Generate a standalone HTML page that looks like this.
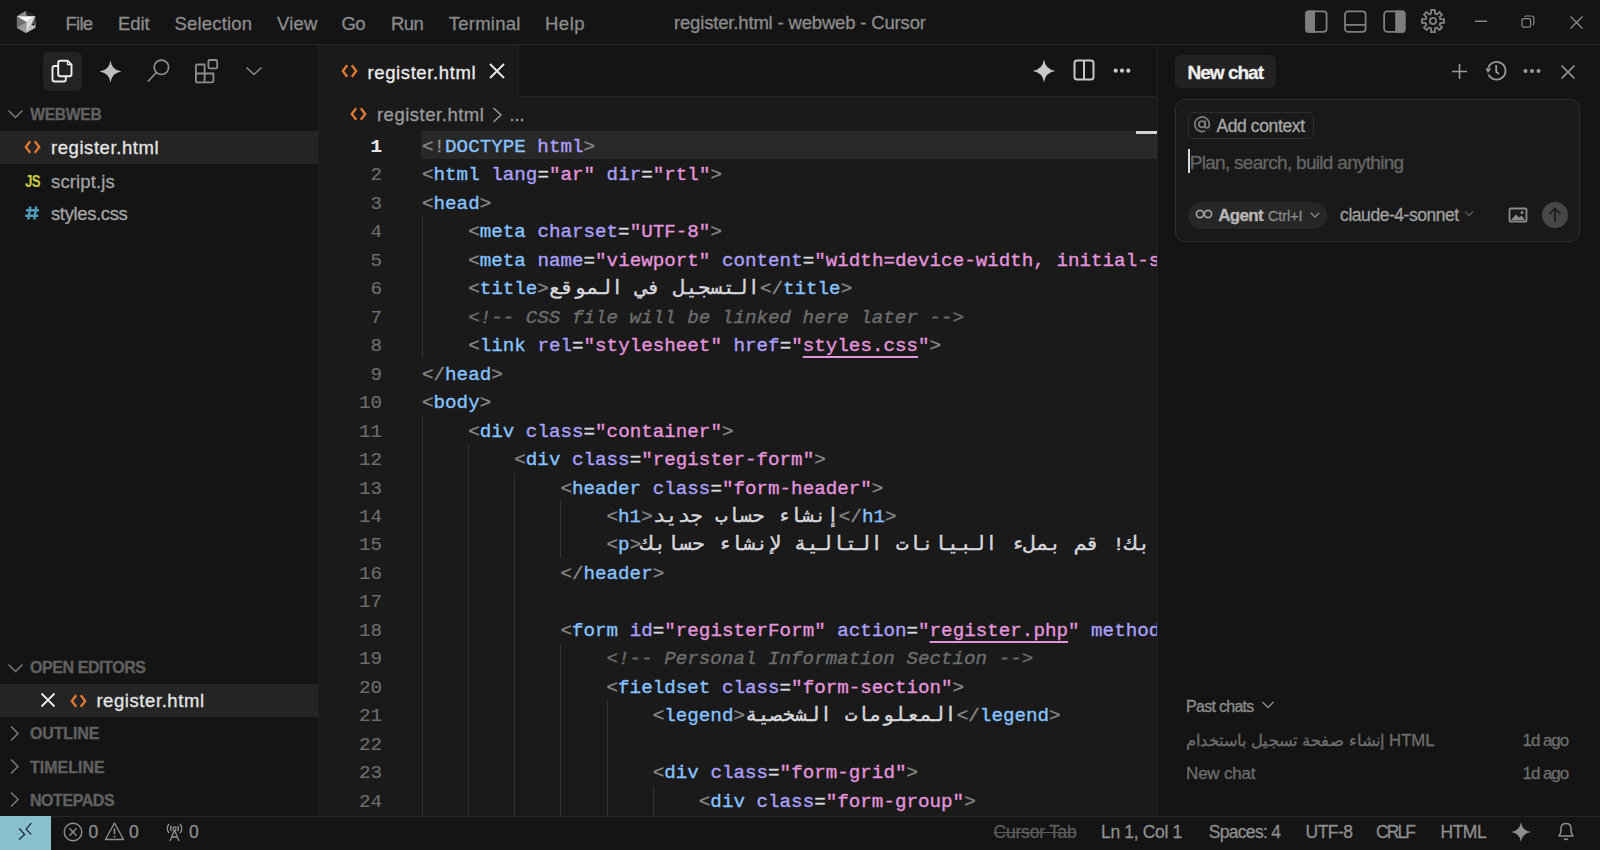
<!DOCTYPE html><html><head><meta charset="utf-8"><style>
html,body{margin:0;padding:0}
body{width:1600px;height:850px;overflow:hidden;position:relative;background:#141414;font-family:"Liberation Sans",sans-serif}
.t{position:absolute;white-space:pre;-webkit-text-stroke:0.3px currentColor}
.r{position:absolute}
.c{position:absolute;left:422px;width:735px;overflow:hidden;white-space:pre;font-family:"Liberation Mono",monospace;font-size:19.23px;line-height:28.49px;height:28.49px;color:#d6d6dd;-webkit-text-stroke:0.35px currentColor}
.ln{position:absolute;left:330px;width:52px;text-align:right;font-family:"Liberation Mono",monospace;font-size:19.23px;line-height:28.49px;-webkit-text-stroke:0.15px currentColor}
.p{color:#898989}.g{color:#87c3ff}.a{color:#aaa0fa}.s{color:#e394dc}.e{color:#d6d6dd}.x{color:#d6d6dd}.m{color:#6d6d6d;font-style:italic}
.ar{display:inline-block;vertical-align:baseline;white-space:pre}.ari{display:inline-block;transform-origin:0 0;white-space:pre}
.u{text-decoration:underline;text-underline-offset:5px;text-decoration-thickness:2px}
</style></head><body>
<div class="r" style="left:0px;top:0px;width:1600px;height:44px;background:#141414;"></div>
<div class="r" style="left:0px;top:44px;width:1600px;height:1px;background:#252525;"></div>
<div class="r" style="left:0px;top:45px;width:318px;height:771px;background:#141414;"></div>
<div class="r" style="left:318px;top:45px;width:1px;height:771px;background:#1f1f1f;"></div>
<div class="r" style="left:319px;top:45px;width:838px;height:771px;background:#1a1a1a;"></div>
<div class="r" style="left:319px;top:45px;width:838px;height:51px;background:#141414;"></div>
<div class="r" style="left:319px;top:96px;width:838px;height:1px;background:#252525;"></div>
<div class="r" style="left:319px;top:45px;width:199px;height:52px;background:#1a1a1a;"></div>
<div class="r" style="left:518px;top:45px;width:1px;height:51px;background:#252525;"></div>
<div class="r" style="left:1157px;top:45px;width:1px;height:771px;background:#222222;"></div>
<div class="r" style="left:1158px;top:45px;width:442px;height:771px;background:#141414;"></div>
<div class="r" style="left:0px;top:816px;width:1600px;height:1px;background:#252525;"></div>
<div class="r" style="left:0px;top:817px;width:1600px;height:33px;background:#141414;"></div>
<svg class="r" style="left:12px;top:8px;" width="28" height="28" viewBox="0 0 28 28"><path d="M4.9 8.2 L13.5 3 L23.4 8.2 L23.4 19.8 L14 25 L4.9 19.8Z" fill="#555"/><path d="M4.9 8.2 L13.5 3 L15 8.2Z" fill="#8c8c8c"/><path d="M13.5 3 L23.4 8.2 L15 8.2Z" fill="#2c2c2c"/><path d="M4.9 8.2 L14.5 14 L14 25 L4.9 19.8Z" fill="#707070"/><path d="M4.9 19.8 L14 14.5 L14 25Z" fill="#9a9a9a"/><path d="M4.9 8.2 L23.4 8.2 L14.5 14Z" fill="#f6f6f6"/><path d="M14.5 14 L23.4 8.2 L19 17 L14 25Z" fill="#dcdcdc"/><path d="M19 17 L23.4 14 L23.4 19.8 L14 25Z" fill="#bdbdbd"/><path d="M19.5 16.5 L23.4 14.5 L22 18Z" fill="#1e1e1e"/></svg>
<div class="t" style="left:65.50px;top:14.84px;font-size:18.5px;line-height:18.5px;color:#8c8c8c;font-weight:400;font-family:'Liberation Sans';letter-spacing:-0.762px;">File</div>
<div class="t" style="left:118.00px;top:14.84px;font-size:18.5px;line-height:18.5px;color:#8c8c8c;font-weight:400;font-family:'Liberation Sans';letter-spacing:-0.071px;">Edit</div>
<div class="t" style="left:174.40px;top:14.84px;font-size:18.5px;line-height:18.5px;color:#8c8c8c;font-weight:400;font-family:'Liberation Sans';letter-spacing:0.197px;">Selection</div>
<div class="t" style="left:276.90px;top:14.84px;font-size:18.5px;line-height:18.5px;color:#8c8c8c;font-weight:400;font-family:'Liberation Sans';letter-spacing:0.242px;">View</div>
<div class="t" style="left:341.50px;top:14.84px;font-size:18.5px;line-height:18.5px;color:#8c8c8c;font-weight:400;font-family:'Liberation Sans';letter-spacing:-0.598px;">Go</div>
<div class="t" style="left:391.00px;top:14.84px;font-size:18.5px;line-height:18.5px;color:#8c8c8c;font-weight:400;font-family:'Liberation Sans';letter-spacing:-0.624px;">Run</div>
<div class="t" style="left:448.80px;top:14.84px;font-size:18.5px;line-height:18.5px;color:#8c8c8c;font-weight:400;font-family:'Liberation Sans';letter-spacing:0.224px;">Terminal</div>
<div class="t" style="left:545.00px;top:14.84px;font-size:18.5px;line-height:18.5px;color:#8c8c8c;font-weight:400;font-family:'Liberation Sans';letter-spacing:0.494px;">Help</div>
<div class="t" style="left:674.00px;top:13.84px;font-size:18.5px;line-height:18.5px;color:#8c8c8c;font-weight:400;font-family:'Liberation Sans';letter-spacing:-0.169px;">register.html - webweb - Cursor</div>
<svg class="r" style="left:1304px;top:10px;" width="24" height="23" viewBox="0 0 24 23"><rect x="2.1" y="1.4" width="20.5" height="20.4" rx="3" fill="none" stroke="#7e7e7e" stroke-width="1.8"/><path d="M4.1 0.5 L11 0.5 L11 22.7 L4.1 22.7 Q1.2 22.7 1.2 19.8 L1.2 3.4 Q1.2 0.5 4.1 0.5Z" fill="#7e7e7e"/></svg>
<svg class="r" style="left:1343px;top:10px;" width="24" height="23" viewBox="0 0 24 23"><rect x="2" y="1.4" width="20.6" height="20.4" rx="3" fill="none" stroke="#7e7e7e" stroke-width="1.8"/><rect x="2" y="14.0" width="20.6" height="1.8" fill="#7e7e7e"/></svg>
<svg class="r" style="left:1382px;top:10px;" width="24" height="23" viewBox="0 0 24 23"><rect x="2.1" y="1.4" width="20.5" height="20.4" rx="3" fill="none" stroke="#7e7e7e" stroke-width="1.8"/><path d="M13.2 0.5 L20.6 0.5 Q23.5 0.5 23.5 3.4 L23.5 19.8 Q23.5 22.7 20.6 22.7 L13.2 22.7Z" fill="#7e7e7e"/></svg>
<svg class="r" style="left:1420px;top:8px;" width="26" height="26" viewBox="0 0 26 26"><path d="M10.97 5.68 L11.23 2.04 L14.77 2.04 L15.03 5.68 L16.75 6.39 L19.50 4.00 L22.00 6.50 L19.61 9.25 L20.32 10.97 L23.96 11.23 L23.96 14.77 L20.32 15.03 L19.61 16.75 L22.00 19.50 L19.50 22.00 L16.75 19.61 L15.03 20.32 L14.77 23.96 L11.23 23.96 L10.97 20.32 L9.25 19.61 L6.50 22.00 L4.00 19.50 L6.39 16.75 L5.68 15.03 L2.04 14.77 L2.04 11.23 L5.68 10.97 L6.39 9.25 L4.00 6.50 L6.50 4.00 L9.25 6.39Z" fill="none" stroke="#7e7e7e" stroke-width="1.9" stroke-linejoin="miter"/><circle cx="13" cy="13" r="3.1" fill="none" stroke="#7e7e7e" stroke-width="1.9"/></svg>
<svg class="r" style="left:1474px;top:20px;" width="14" height="3" viewBox="0 0 14 3"><rect x="1" y="0.5" width="12" height="1.5" fill="#8a8a8a"/></svg>
<svg class="r" style="left:1521px;top:15px;" width="14" height="14" viewBox="0 0 14 14"><rect x="1" y="3.6" width="8.6" height="8.6" rx="1.6" fill="none" stroke="#8a8a8a" stroke-width="1.2"/><path d="M3.6 1.8 Q4 1 5 1 L10.8 1 Q12.8 1 12.8 3 L12.8 8.6 Q12.8 9.6 11.8 9.8" fill="none" stroke="#8a8a8a" stroke-width="1.2"/></svg>
<svg class="r" style="left:1569px;top:15px;" width="15" height="15" viewBox="0 0 15 15"><path d="M1.5 1.5 L13.5 13.5 M13.5 1.5 L1.5 13.5" stroke="#8a8a8a" stroke-width="1.4"/></svg>
<div class="r" style="left:43px;top:52px;width:39px;height:39px;background:#232323;border-radius:6px;"></div>
<svg class="r" style="left:50px;top:59px;" width="24" height="26" viewBox="0 0 24 26"><path d="M8.2 7 L4.5 7 Q2.5 7 2.5 9 L2.5 20.5 Q2.5 22.5 4.5 22.5 L13.8 22.5 Q15.8 22.5 15.8 20.5 L15.8 17.3" fill="none" stroke="#ededed" stroke-width="1.9"/><path d="M8.2 3.7 Q8.2 1.7 10.2 1.7 L17.5 1.7 L21.5 5.7 L21.5 15.3 Q21.5 17.3 19.5 17.3 L10.2 17.3 Q8.2 17.3 8.2 15.3 Z" fill="none" stroke="#ededed" stroke-width="1.9" stroke-linejoin="round"/><path d="M17.5 1.7 L17.5 5.7 L21.5 5.7" fill="none" stroke="#ededed" stroke-width="1.3"/></svg>
<svg class="r" style="left:98px;top:59px;" width="25" height="25" viewBox="0 0 25 25"><path d="M12.5 1.5 Q13.82 11.18 23.5 12.5 Q13.82 13.82 12.5 23.5 Q11.18 13.82 1.5 12.5 Q11.18 11.18 12.5 1.5Z" fill="#bdbdbd"/></svg>
<svg class="r" style="left:146px;top:59px;" width="25" height="25" viewBox="0 0 25 25"><circle cx="15.4" cy="8.3" r="7.2" fill="none" stroke="#8e8e8e" stroke-width="1.7"/><path d="M10.2 13.5 L2.5 22" stroke="#8e8e8e" stroke-width="1.7" stroke-linecap="round"/></svg>
<svg class="r" style="left:193px;top:58px;" width="27" height="27" viewBox="0 0 27 27"><path d="M2.9 8 Q2.9 6.5 4.4 6.5 L11.6 6.5 L11.6 15.5 L20.4 15.5 L20.4 22.9 Q20.4 24.4 18.9 24.4 L4.4 24.4 Q2.9 24.4 2.9 22.9 Z M2.9 15.5 L11.6 15.5 M11.6 15.5 L11.6 24.4" fill="none" stroke="#8e8e8e" stroke-width="1.8"/><rect x="15.4" y="2" width="8.8" height="8.4" rx="1.5" fill="none" stroke="#8e8e8e" stroke-width="1.8"/></svg>
<svg class="r" style="left:244px;top:64px;" width="20" height="14" viewBox="0 0 20 14"><path d="M2.5 3.5 L10 10.5 L17.5 3.5" fill="none" stroke="#8a8a8a" stroke-width="1.6"/></svg>
<svg class="r" style="left:7px;top:108.5px;" width="17" height="11" viewBox="0 0 17 11"><path d="M1.5 1.5 L8.5 8.5 L15.5 1.5" fill="none" stroke="#7a7a7a" stroke-width="1.5"/></svg>
<div class="t" style="left:30.20px;top:106.79px;font-size:15.6px;line-height:15.6px;color:#616161;font-weight:700;font-family:'Liberation Sans';letter-spacing:-0.235px;">WEBWEB</div>
<div class="r" style="left:0px;top:131px;width:318px;height:33px;background:#242424;"></div>
<svg class="r" style="left:24px;top:140.0px;" width="17" height="14" viewBox="0 0 17 14"><path d="M6.2 1.2 L1.8 7 L6.2 12.8 M10.8 1.2 L15.2 7 L10.8 12.8" fill="none" stroke="#e37933" stroke-width="2.3" stroke-linejoin="miter"/></svg>
<div class="t" style="left:51.00px;top:139.34px;font-size:18.5px;line-height:18.5px;color:#e4e4e4;font-weight:400;font-family:'Liberation Sans';letter-spacing:0.564px;">register.html</div>
<div class="t" style="left:25.00px;top:172.79px;font-size:16.2px;line-height:16.2px;color:#cbcb41;font-weight:700;font-family:'Liberation Sans';letter-spacing:-0.8px;transform:scaleX(0.82);transform-origin:0 0;-webkit-text-stroke:0.1px currentColor;">JS</div>
<div class="t" style="left:51.00px;top:172.84px;font-size:18.5px;line-height:18.5px;color:#a3a3a3;font-weight:400;font-family:'Liberation Sans';letter-spacing:0.136px;">script.js</div>
<svg class="r" style="left:24px;top:205px;" width="17" height="16" viewBox="0 0 17 16"><path d="M6.3 1.5 L4.3 14.5 M12.3 1.5 L10.3 14.5 M2 5.3 L15 5.3 M1.2 10.7 L14.2 10.7" stroke="#519aba" stroke-width="2.4"/></svg>
<div class="t" style="left:51.00px;top:205.24px;font-size:18.5px;line-height:18.5px;color:#a3a3a3;font-weight:400;font-family:'Liberation Sans';letter-spacing:-0.378px;">styles.css</div>
<svg class="r" style="left:7px;top:663px;" width="17" height="11" viewBox="0 0 17 11"><path d="M1.5 1.5 L8.5 8.5 L15.5 1.5" fill="none" stroke="#7a7a7a" stroke-width="1.5"/></svg>
<div class="t" style="left:30.00px;top:660.06px;font-size:16px;line-height:16px;color:#616161;font-weight:700;font-family:'Liberation Sans';letter-spacing:-0.422px;">OPEN EDITORS</div>
<div class="r" style="left:0px;top:684px;width:318px;height:33px;background:#242424;"></div>
<svg class="r" style="left:40px;top:692px;" width="16" height="16" viewBox="0 0 16 16"><path d="M1.5 1.5 L14.5 14.5 M14.5 1.5 L1.5 14.5" stroke="#e8e8e8" stroke-width="1.8"/></svg>
<svg class="r" style="left:69.5px;top:693.5px;" width="17" height="14" viewBox="0 0 17 14"><path d="M6.2 1.2 L1.8 7 L6.2 12.8 M10.8 1.2 L15.2 7 L10.8 12.8" fill="none" stroke="#e37933" stroke-width="2.3" stroke-linejoin="miter"/></svg>
<div class="t" style="left:96.40px;top:692.34px;font-size:18.5px;line-height:18.5px;color:#e4e4e4;font-weight:400;font-family:'Liberation Sans';letter-spacing:0.572px;">register.html</div>
<svg class="r" style="left:9.3px;top:724.7px;" width="11" height="17" viewBox="0 0 11 17"><path d="M2 1.5 L9 8.5 L2 15.5" fill="none" stroke="#7a7a7a" stroke-width="1.5"/></svg>
<div class="t" style="left:30.00px;top:726.26px;font-size:16px;line-height:16px;color:#616161;font-weight:700;font-family:'Liberation Sans';letter-spacing:-0.140px;">OUTLINE</div>
<svg class="r" style="left:9.3px;top:758.1px;" width="11" height="17" viewBox="0 0 11 17"><path d="M2 1.5 L9 8.5 L2 15.5" fill="none" stroke="#7a7a7a" stroke-width="1.5"/></svg>
<div class="t" style="left:30.00px;top:759.66px;font-size:16px;line-height:16px;color:#616161;font-weight:700;font-family:'Liberation Sans';letter-spacing:-0.006px;">TIMELINE</div>
<svg class="r" style="left:9.3px;top:791.3000000000001px;" width="11" height="17" viewBox="0 0 11 17"><path d="M2 1.5 L9 8.5 L2 15.5" fill="none" stroke="#7a7a7a" stroke-width="1.5"/></svg>
<div class="t" style="left:30.00px;top:792.86px;font-size:16px;line-height:16px;color:#616161;font-weight:700;font-family:'Liberation Sans';letter-spacing:-0.440px;">NOTEPADS</div>
<svg class="r" style="left:340.5px;top:64.0px;" width="17" height="14" viewBox="0 0 17 14"><path d="M6.2 1.2 L1.8 7 L6.2 12.8 M10.8 1.2 L15.2 7 L10.8 12.8" fill="none" stroke="#e37933" stroke-width="2.3" stroke-linejoin="miter"/></svg>
<div class="t" style="left:367.50px;top:63.64px;font-size:18.5px;line-height:18.5px;color:#ececec;font-weight:400;font-family:'Liberation Sans';letter-spacing:0.606px;">register.html</div>
<svg class="r" style="left:488px;top:62px;" width="18" height="18" viewBox="0 0 18 18"><path d="M2 2 L16 16 M16 2 L2 16" stroke="#e8e8e8" stroke-width="1.9"/></svg>
<svg class="r" style="left:1031px;top:58px;" width="26" height="26" viewBox="0 0 26 26"><path d="M13 1.5999999999999996 Q14.368 11.632 24.4 13 Q14.368 14.368 13 24.4 Q11.632 14.368 1.5999999999999996 13 Q11.632 11.632 13 1.5999999999999996Z" fill="#c8c8c8"/></svg>
<svg class="r" style="left:1072px;top:58px;" width="24" height="24" viewBox="0 0 24 24"><rect x="2.5" y="2.5" width="19" height="19" rx="2.5" fill="none" stroke="#c8c8c8" stroke-width="2"/><path d="M12 2.5 L12 21.5" stroke="#c8c8c8" stroke-width="2"/></svg>
<svg class="r" style="left:1112px;top:67px;" width="20" height="8" viewBox="0 0 20 8"><circle cx="3.7" cy="3.7" r="2.1" fill="#c8c8c8"/><circle cx="10" cy="3.7" r="2.1" fill="#c8c8c8"/><circle cx="16.3" cy="3.7" r="2.1" fill="#c8c8c8"/></svg>
<svg class="r" style="left:350px;top:107.0px;" width="17" height="14" viewBox="0 0 17 14"><path d="M6.2 1.2 L1.8 7 L6.2 12.8 M10.8 1.2 L15.2 7 L10.8 12.8" fill="none" stroke="#e37933" stroke-width="2.3" stroke-linejoin="miter"/></svg>
<div class="t" style="left:376.90px;top:105.74px;font-size:18.5px;line-height:18.5px;color:#9a9a9a;font-weight:400;font-family:'Liberation Sans';letter-spacing:0.522px;">register.html</div>
<svg class="r" style="left:491px;top:106px;" width="13" height="18" viewBox="0 0 13 18"><path d="M2.5 2 L10 9 L2.5 16" fill="none" stroke="#9a9a9a" stroke-width="1.5"/></svg>
<div class="t" style="left:509.50px;top:106.16px;font-size:18px;line-height:18px;color:#9a9a9a;font-weight:400;font-family:'Liberation Sans';">...</div>
<div class="r" style="left:421px;top:131px;width:736px;height:28px;background:#282828;"></div>
<div class="r" style="left:1136px;top:130.5px;width:21px;height:3.5px;background:#d4d4d4;"></div>
<div class="r" style="left:422px;top:216px;width:1px;height:142px;background:#333333;"></div>
<div class="r" style="left:422px;top:416px;width:1px;height:400px;background:#333333;"></div>
<div class="r" style="left:468px;top:444px;width:1px;height:372px;background:#333333;"></div>
<div class="r" style="left:514px;top:473px;width:1px;height:343px;background:#333333;"></div>
<div class="r" style="left:560px;top:501px;width:1px;height:57px;background:#333333;"></div>
<div class="r" style="left:560px;top:644px;width:1px;height:172px;background:#333333;"></div>
<div class="r" style="left:607px;top:701px;width:1px;height:115px;background:#333333;"></div>
<div class="r" style="left:653px;top:786px;width:1px;height:30px;background:#333333;"></div>
<div class="ln" style="top:132.63px;color:#e8e8e8;font-weight:700">1</div>
<div class="c" style="top:132.63px"><span class="p">&lt;!</span><span class="g">DOCTYPE</span> <span class="a">html</span><span class="p">&gt;</span></div>
<div class="ln" style="top:161.12px;color:#6e6e6e;font-weight:400">2</div>
<div class="c" style="top:161.12px"><span class="p">&lt;</span><span class="g">html</span> <span class="a">lang</span><span class="e">=</span><span class="s">&quot;ar&quot;</span> <span class="a">dir</span><span class="e">=</span><span class="s">&quot;rtl&quot;</span><span class="p">&gt;</span></div>
<div class="ln" style="top:189.61px;color:#6e6e6e;font-weight:400">3</div>
<div class="c" style="top:189.61px"><span class="p">&lt;</span><span class="g">head</span><span class="p">&gt;</span></div>
<div class="ln" style="top:218.10px;color:#6e6e6e;font-weight:400">4</div>
<div class="c" style="top:218.10px">    <span class="p">&lt;</span><span class="g">meta</span> <span class="a">charset</span><span class="e">=</span><span class="s">&quot;UTF-8&quot;</span><span class="p">&gt;</span></div>
<div class="ln" style="top:246.59px;color:#6e6e6e;font-weight:400">5</div>
<div class="c" style="top:246.59px">    <span class="p">&lt;</span><span class="g">meta</span> <span class="a">name</span><span class="e">=</span><span class="s">&quot;viewport&quot;</span> <span class="a">content</span><span class="e">=</span><span class="s">&quot;width=device-width, initial-scale=1.0&quot;</span><span class="p">&gt;</span></div>
<div class="ln" style="top:275.08px;color:#6e6e6e;font-weight:400">6</div>
<div class="c" style="top:275.08px">    <span class="p">&lt;</span><span class="g">title</span><span class="p">&gt;</span><span class="x ar" style="width:211.00px"><span class="ari" style="transform:scaleX(1.0711)">التسجيل في الموقع</span></span><span class="p">&lt;/</span><span class="g">title</span><span class="p">&gt;</span></div>
<div class="ln" style="top:303.57px;color:#6e6e6e;font-weight:400">7</div>
<div class="c" style="top:303.57px">    <span class="m">&lt;!-- CSS file will be linked here later --&gt;</span></div>
<div class="ln" style="top:332.06px;color:#6e6e6e;font-weight:400">8</div>
<div class="c" style="top:332.06px">    <span class="p">&lt;</span><span class="g">link</span> <span class="a">rel</span><span class="e">=</span><span class="s">&quot;stylesheet&quot;</span> <span class="a">href</span><span class="e">=</span><span class="s">"</span><span class="s u">styles.css</span><span class="s">"</span><span class="p">&gt;</span></div>
<div class="ln" style="top:360.55px;color:#6e6e6e;font-weight:400">9</div>
<div class="c" style="top:360.55px"><span class="p">&lt;/</span><span class="g">head</span><span class="p">&gt;</span></div>
<div class="ln" style="top:389.04px;color:#6e6e6e;font-weight:400">10</div>
<div class="c" style="top:389.04px"><span class="p">&lt;</span><span class="g">body</span><span class="p">&gt;</span></div>
<div class="ln" style="top:417.53px;color:#6e6e6e;font-weight:400">11</div>
<div class="c" style="top:417.53px">    <span class="p">&lt;</span><span class="g">div</span> <span class="a">class</span><span class="e">=</span><span class="s">&quot;container&quot;</span><span class="p">&gt;</span></div>
<div class="ln" style="top:446.02px;color:#6e6e6e;font-weight:400">12</div>
<div class="c" style="top:446.02px">        <span class="p">&lt;</span><span class="g">div</span> <span class="a">class</span><span class="e">=</span><span class="s">&quot;register-form&quot;</span><span class="p">&gt;</span></div>
<div class="ln" style="top:474.51px;color:#6e6e6e;font-weight:400">13</div>
<div class="c" style="top:474.51px">            <span class="p">&lt;</span><span class="g">header</span> <span class="a">class</span><span class="e">=</span><span class="s">&quot;form-header&quot;</span><span class="p">&gt;</span></div>
<div class="ln" style="top:503.00px;color:#6e6e6e;font-weight:400">14</div>
<div class="c" style="top:503.00px">                <span class="p">&lt;</span><span class="g">h1</span><span class="p">&gt;</span><span class="x ar" style="width:186.10px"><span class="ari" style="transform:scaleX(1.0695)">إنشاء حساب جديد</span></span><span class="p">&lt;/</span><span class="g">h1</span><span class="p">&gt;</span></div>
<div class="ln" style="top:531.49px;color:#6e6e6e;font-weight:400">15</div>
<div class="c" style="top:531.49px">                <span class="p">&lt;</span><span class="g">p</span><span class="p">&gt;</span><span class="x ar" style="width:586.00px"><span class="ari" style="transform:scaleX(1.1015)">مرحباً بك! قم بملء البيانات التالية لإنشاء حسابك</span></span><span class="p">&lt;/</span><span class="g">p</span><span class="p">&gt;</span></div>
<div class="ln" style="top:559.98px;color:#6e6e6e;font-weight:400">16</div>
<div class="c" style="top:559.98px">            <span class="p">&lt;/</span><span class="g">header</span><span class="p">&gt;</span></div>
<div class="ln" style="top:588.47px;color:#6e6e6e;font-weight:400">17</div>
<div class="c" style="top:588.47px"></div>
<div class="ln" style="top:616.96px;color:#6e6e6e;font-weight:400">18</div>
<div class="c" style="top:616.96px">            <span class="p">&lt;</span><span class="g">form</span> <span class="a">id</span><span class="e">=</span><span class="s">&quot;registerForm&quot;</span> <span class="a">action</span><span class="e">=</span><span class="s">"</span><span class="s u">register.php</span><span class="s">"</span> <span class="a">method</span><span class="e">=</span><span class="s">&quot;POST&quot;</span><span class="p">&gt;</span></div>
<div class="ln" style="top:645.45px;color:#6e6e6e;font-weight:400">19</div>
<div class="c" style="top:645.45px">                <span class="m">&lt;!-- Personal Information Section --&gt;</span></div>
<div class="ln" style="top:673.94px;color:#6e6e6e;font-weight:400">20</div>
<div class="c" style="top:673.94px">                <span class="p">&lt;</span><span class="g">fieldset</span> <span class="a">class</span><span class="e">=</span><span class="s">&quot;form-section&quot;</span><span class="p">&gt;</span></div>
<div class="ln" style="top:702.43px;color:#6e6e6e;font-weight:400">21</div>
<div class="c" style="top:702.43px">                    <span class="p">&lt;</span><span class="g">legend</span><span class="p">&gt;</span><span class="x ar" style="width:211.80px"><span class="ari" style="transform:scaleX(1.0751)">المعلومات الشخصية</span></span><span class="p">&lt;/</span><span class="g">legend</span><span class="p">&gt;</span></div>
<div class="ln" style="top:730.92px;color:#6e6e6e;font-weight:400">22</div>
<div class="c" style="top:730.92px"></div>
<div class="ln" style="top:759.41px;color:#6e6e6e;font-weight:400">23</div>
<div class="c" style="top:759.41px">                    <span class="p">&lt;</span><span class="g">div</span> <span class="a">class</span><span class="e">=</span><span class="s">&quot;form-grid&quot;</span><span class="p">&gt;</span></div>
<div class="ln" style="top:787.90px;color:#6e6e6e;font-weight:400">24</div>
<div class="c" style="top:787.90px">                        <span class="p">&lt;</span><span class="g">div</span> <span class="a">class</span><span class="e">=</span><span class="s">&quot;form-group&quot;</span><span class="p">&gt;</span></div>
<div class="r" style="left:1175px;top:55px;width:101px;height:33px;background:#222222;border-radius:6px;"></div>
<div class="t" style="left:1187.50px;top:62.82px;font-size:19px;line-height:19px;color:#f0f0f0;font-weight:700;font-family:'Liberation Sans';letter-spacing:-0.987px;">New chat</div>
<svg class="r" style="left:1451px;top:63px;" width="17" height="17" viewBox="0 0 17 17"><path d="M8.5 1 L8.5 16 M1 8.5 L16 8.5" stroke="#9a9a9a" stroke-width="1.6"/></svg>
<svg class="r" style="left:1484px;top:59px;" width="24" height="24" viewBox="0 0 24 24"><path d="M4.3 8.6 A8.9 8.9 0 1 1 4.6 15.6" fill="none" stroke="#9a9a9a" stroke-width="1.8"/><path d="M1.6 9.2 L7.2 9.6 L3.9 14.2Z" fill="#9a9a9a"/><path d="M12.2 6 L12.2 12.8 L14.8 15" fill="none" stroke="#9a9a9a" stroke-width="1.8"/></svg>
<svg class="r" style="left:1522px;top:67px;" width="20" height="8" viewBox="0 0 20 8"><circle cx="3.5" cy="4" r="2" fill="#9a9a9a"/><circle cx="10" cy="4" r="2" fill="#9a9a9a"/><circle cx="16.5" cy="4" r="2" fill="#9a9a9a"/></svg>
<svg class="r" style="left:1560px;top:64px;" width="16" height="16" viewBox="0 0 16 16"><path d="M1.5 1.5 L14.5 14.5 M14.5 1.5 L1.5 14.5" stroke="#9a9a9a" stroke-width="1.7"/></svg>
<div class="r" style="left:1175px;top:99px;width:403px;height:141px;background:#191919;border:1.5px solid #2e2e2e;border-radius:10px;box-sizing:border-box;width:405px;height:143px;"></div>
<div class="r" style="left:1188px;top:112px;width:126px;height:27px;background:transparent;border:1px solid #2c2c2c;border-radius:5px;box-sizing:border-box;"></div>
<svg class="r" style="left:1192px;top:114px;" width="21" height="22" viewBox="0 0 21 22"><path d="M13.2 16.8 A7.3 7.3 0 1 1 17.3 10.2 L17.3 11.2 Q17.3 13.8 15.1 13.8 Q13.1 13.8 13.1 11.2 L13.1 6.6" fill="none" stroke="#7a7a7a" stroke-width="1.8"/><circle cx="10" cy="10.2" r="3.1" fill="none" stroke="#7a7a7a" stroke-width="1.8"/></svg>
<div class="t" style="left:1216.40px;top:117.79px;font-size:17.5px;line-height:17.5px;color:#a8a8a8;font-weight:400;font-family:'Liberation Sans';letter-spacing:-0.380px;">Add context</div>
<div class="r" style="left:1188px;top:149px;width:2px;height:24px;background:#d8d8d8;"></div>
<div class="t" style="left:1189.70px;top:153.02px;font-size:19px;line-height:19px;color:#666666;font-weight:400;font-family:'Liberation Sans';letter-spacing:-0.701px;">Plan, search, build anything</div>
<div class="r" style="left:1188px;top:202px;width:139px;height:27px;background:#262626;border-radius:14px;"></div>
<svg class="r" style="left:1195px;top:208px;" width="19" height="12" viewBox="0 0 19 12"><circle cx="5" cy="6" r="3.6" fill="none" stroke="#a0a0a0" stroke-width="1.7"/><circle cx="13" cy="6" r="3.6" fill="none" stroke="#a0a0a0" stroke-width="1.7"/></svg>
<div class="t" style="left:1218.30px;top:207.01px;font-size:17px;line-height:17px;color:#b8b8b8;font-weight:700;font-family:'Liberation Sans';letter-spacing:-0.699px;">Agent</div>
<div class="t" style="left:1268.00px;top:209.13px;font-size:14.5px;line-height:14.5px;color:#8a8a8a;font-weight:400;font-family:'Liberation Sans';letter-spacing:-0.103px;">Ctrl+I</div>
<svg class="r" style="left:1309px;top:211px;" width="12" height="8" viewBox="0 0 12 8"><path d="M1.8 1.8 L6 6 L10.2 1.8" fill="none" stroke="#8a8a8a" stroke-width="1.3"/></svg>
<div class="t" style="left:1340.10px;top:206.59px;font-size:17.5px;line-height:17.5px;color:#a0a0a0;font-weight:400;font-family:'Liberation Sans';letter-spacing:-0.455px;">claude-4-sonnet</div>
<svg class="r" style="left:1464px;top:210px;" width="10" height="7" viewBox="0 0 10 7"><path d="M1 1.5 L5 5.5 L9 1.5" fill="none" stroke="#5a5a5a" stroke-width="1.3"/></svg>
<svg class="r" style="left:1508px;top:207px;" width="21" height="17" viewBox="0 0 21 17"><rect x="1.5" y="1.5" width="17" height="13" rx="1" fill="none" stroke="#8a8a8a" stroke-width="1.8"/><path d="M3 13 L8 7.5 L11 10.5 L13.5 8.5 L17 13Z" fill="#8a8a8a"/><circle cx="14" cy="5.5" r="1.5" fill="#8a8a8a"/></svg>
<div class="r" style="left:1541.5px;top:202px;width:26px;height:26px;background:#474747;border-radius:50%;"></div>
<svg class="r" style="left:1541.5px;top:202px;" width="26" height="26" viewBox="0 0 26 26"><path d="M13 20 L13 6.5 M7.5 12 L13 6.5 L18.5 12" fill="none" stroke="#1c1c1c" stroke-width="1.7"/></svg>
<div class="t" style="left:1186.10px;top:698.66px;font-size:16px;line-height:16px;color:#8c8c8c;font-weight:400;font-family:'Liberation Sans';letter-spacing:-0.724px;">Past chats</div>
<svg class="r" style="left:1261px;top:700px;" width="14" height="10" viewBox="0 0 14 10"><path d="M1.5 2 L7 7.5 L12.5 2" fill="none" stroke="#8c8c8c" stroke-width="1.4"/></svg>
<div class="t" style="left:1186.00px;top:732.20px;font-size:16.3px;line-height:16.3px;color:#6e6e6e;font-weight:400;font-family:'Liberation Sans';"><span class="ar" style="width:248.5px"><span class="ari" style="transform:scaleX(1.027)" dir="ltr">إنشاء صفحة تسجيل باستخدام HTML</span></span></div>
<div class="t" style="left:1522.50px;top:731.61px;font-size:17px;line-height:17px;color:#6e6e6e;font-weight:400;font-family:'Liberation Sans';letter-spacing:-1.064px;">1d ago</div>
<div class="t" style="left:1186.10px;top:764.61px;font-size:17px;line-height:17px;color:#6e6e6e;font-weight:400;font-family:'Liberation Sans';letter-spacing:-0.227px;">New chat</div>
<div class="t" style="left:1522.50px;top:764.61px;font-size:17px;line-height:17px;color:#6e6e6e;font-weight:400;font-family:'Liberation Sans';letter-spacing:-1.064px;">1d ago</div>
<div class="r" style="left:0px;top:816px;width:51px;height:34px;background:#88c0d0;"></div>
<svg class="r" style="left:0px;top:816px;" width="51" height="34" viewBox="0 0 51 34"><path d="M19.2 12.5 L24.6 18.4 L19.2 23.5 M31.3 7.2 L26.2 13.2 L31.3 18.4" fill="none" stroke="#1a2530" stroke-width="1.3"/></svg>
<svg class="r" style="left:63px;top:822px;" width="20" height="20" viewBox="0 0 20 20"><circle cx="10" cy="10" r="8.8" fill="none" stroke="#8e8e8e" stroke-width="1.4"/><path d="M6.3 6.3 L13.7 13.7 M13.7 6.3 L6.3 13.7" stroke="#8e8e8e" stroke-width="1.4"/></svg>
<div class="t" style="left:88.50px;top:823.89px;font-size:17.5px;line-height:17.5px;color:#8e8e8e;font-weight:400;font-family:'Liberation Sans';">0</div>
<svg class="r" style="left:104px;top:821px;" width="21" height="20" viewBox="0 0 21 20"><path d="M10.5 2 L19.5 18.5 L1.5 18.5Z" fill="none" stroke="#8e8e8e" stroke-width="1.4" stroke-linejoin="round"/><path d="M10.5 7.5 L10.5 13" stroke="#8e8e8e" stroke-width="1.6"/><circle cx="10.5" cy="15.6" r="1" fill="#8e8e8e"/></svg>
<div class="t" style="left:129.00px;top:823.89px;font-size:17.5px;line-height:17.5px;color:#8e8e8e;font-weight:400;font-family:'Liberation Sans';">0</div>
<svg class="r" style="left:164px;top:821px;" width="21" height="21" viewBox="0 0 21 21"><path d="M5 3 Q1.5 7.5 5 12 M16 3 Q19.5 7.5 16 12 M7.5 5 Q5.5 7.5 7.5 10 M13.5 5 Q15.5 7.5 13.5 10" fill="none" stroke="#8e8e8e" stroke-width="1.4"/><circle cx="10.5" cy="7.5" r="1.6" fill="none" stroke="#8e8e8e" stroke-width="1.3"/><path d="M10.5 9 L6 20 M10.5 9 L15 20 M7.5 16 L13.5 16" fill="none" stroke="#8e8e8e" stroke-width="1.4"/></svg>
<div class="t" style="left:189.00px;top:823.89px;font-size:17.5px;line-height:17.5px;color:#8e8e8e;font-weight:400;font-family:'Liberation Sans';">0</div>
<div class="t" style="left:993.60px;top:823.89px;font-size:17.5px;line-height:17.5px;color:#5c5c5c;font-weight:400;font-family:'Liberation Sans';letter-spacing:-0.224px;text-decoration:line-through;">Cursor Tab</div>
<div class="t" style="left:1101.00px;top:823.89px;font-size:17.5px;line-height:17.5px;color:#8e8e8e;font-weight:400;font-family:'Liberation Sans';letter-spacing:-0.331px;">Ln 1, Col 1</div>
<div class="t" style="left:1208.70px;top:823.89px;font-size:17.5px;line-height:17.5px;color:#8e8e8e;font-weight:400;font-family:'Liberation Sans';letter-spacing:-0.686px;">Spaces: 4</div>
<div class="t" style="left:1305.60px;top:823.89px;font-size:17.5px;line-height:17.5px;color:#8e8e8e;font-weight:400;font-family:'Liberation Sans';letter-spacing:-0.578px;">UTF-8</div>
<div class="t" style="left:1376.00px;top:823.89px;font-size:17.5px;line-height:17.5px;color:#8e8e8e;font-weight:400;font-family:'Liberation Sans';letter-spacing:-1.892px;">CRLF</div>
<div class="t" style="left:1440.50px;top:823.89px;font-size:17.5px;line-height:17.5px;color:#8e8e8e;font-weight:400;font-family:'Liberation Sans';letter-spacing:-0.500px;">HTML</div>
<svg class="r" style="left:1510px;top:821px;" width="22" height="22" viewBox="0 0 22 22"><path d="M11 1 Q12.2 9.8 21 11 Q12.2 12.2 11 21 Q9.8 12.2 1 11 Q9.8 9.8 11 1Z" fill="#8e8e8e"/></svg>
<svg class="r" style="left:1556px;top:819.5px;" width="20" height="23" viewBox="0 0 20 23"><path d="M3 16 L3.5 15 Q5 13 5 10 L5 8.5 Q5 3.5 10 3.5 Q15 3.5 15 8.5 L15 10 Q15 13 16.5 15 L17 16Z" fill="none" stroke="#8e8e8e" stroke-width="1.5" stroke-linejoin="round"/><path d="M8 18.5 Q10 20.5 12 18.5" fill="none" stroke="#8e8e8e" stroke-width="1.5"/></svg>
<script>document.querySelectorAll('.ar').forEach(function(o){var i=o.firstChild;var w=parseFloat(o.style.width);i.style.transform='none';var n=i.getBoundingClientRect().width;if(n>0){i.style.transform='scaleX('+(w/n).toFixed(4)+')';}});</script>
</body></html>
